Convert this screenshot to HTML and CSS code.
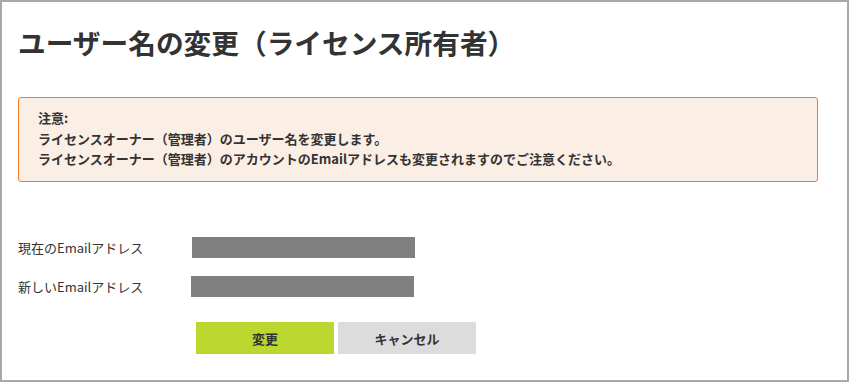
FILE: index.html
```html
<!DOCTYPE html>
<html lang="ja">
<head>
<meta charset="utf-8">
<link rel="stylesheet" href="styles.css">
</head>
<body>
<div class="frame">
  <h1 class="title">ユーザー名の変更（ライセンス所有者）</h1>
  <div class="notice">
    <p>注意:</p>
    <p>ライセンスオーナー（管理者）のユーザー名を変更します。</p>
    <p>ライセンスオーナー（管理者）のアカウントのEmailアドレスも変更されますのでご注意ください。</p>
  </div>
  <div class="form">
    <div class="row">
      <span class="label">現在のEmailアドレス</span>
      <span class="field field-current"></span>
    </div>
    <div class="row">
      <span class="label">新しいEmailアドレス</span>
      <span class="field field-new"></span>
    </div>
  </div>
  <div class="actions">
    <button class="btn btn-ok">変更</button>
    <button class="btn btn-cancel">キャンセル</button>
  </div>
</div>
</body>
</html>
```
FILE: styles.css
```css
* { box-sizing: border-box; }
html, body { margin: 0; padding: 0; }
body {
  font-family: "Noto Sans CJK JP", "Noto Sans", sans-serif;
  color: #333;
  background: #fff;
}
.frame {
  width: 849px;
  height: 382px;
  border: 2px solid #aba7a7;
  padding: 0 0 0 16px;
}
.title {
  margin: 0;
  padding-top: 22px;
  font-size: 27.7px;
  line-height: 36px;
  font-weight: bold;
  color: #333;
}
.notice {
  margin-top: 37px;
  width: 800px;
  height: 85px;
  background: #fbefe5;
  border: 1px solid #f07a26;
  border-radius: 3px;
  padding: 10px 19px 0;
  font-size: 13px;
  line-height: 20.5px;
  font-weight: bold;
}
.notice p { margin: 0; }
.form {
  margin-top: 55px;
  display: flex;
  flex-direction: column;
  gap: 18px;
}
.row {
  display: flex;
  align-items: center;
  height: 21px;
}
.label {
  width: 174px;
  font-size: 13px;
  color: #333;
}
.field {
  display: block;
  width: 223px;
  height: 21px;
  background: #808080;
}
.field-new { margin-left: -1px; }
.actions {
  margin-top: 25px;
  margin-left: 178px;
  display: flex;
  gap: 4px;
}
.btn {
  width: 138px;
  height: 32px;
  border: none;
  font-family: inherit;
  font-size: 13px;
  font-weight: bold;
  color: #333;
  padding: 0;
}
.btn-ok { background: #bdd731; }
.btn-cancel { background: #dcdcdc; }
```
